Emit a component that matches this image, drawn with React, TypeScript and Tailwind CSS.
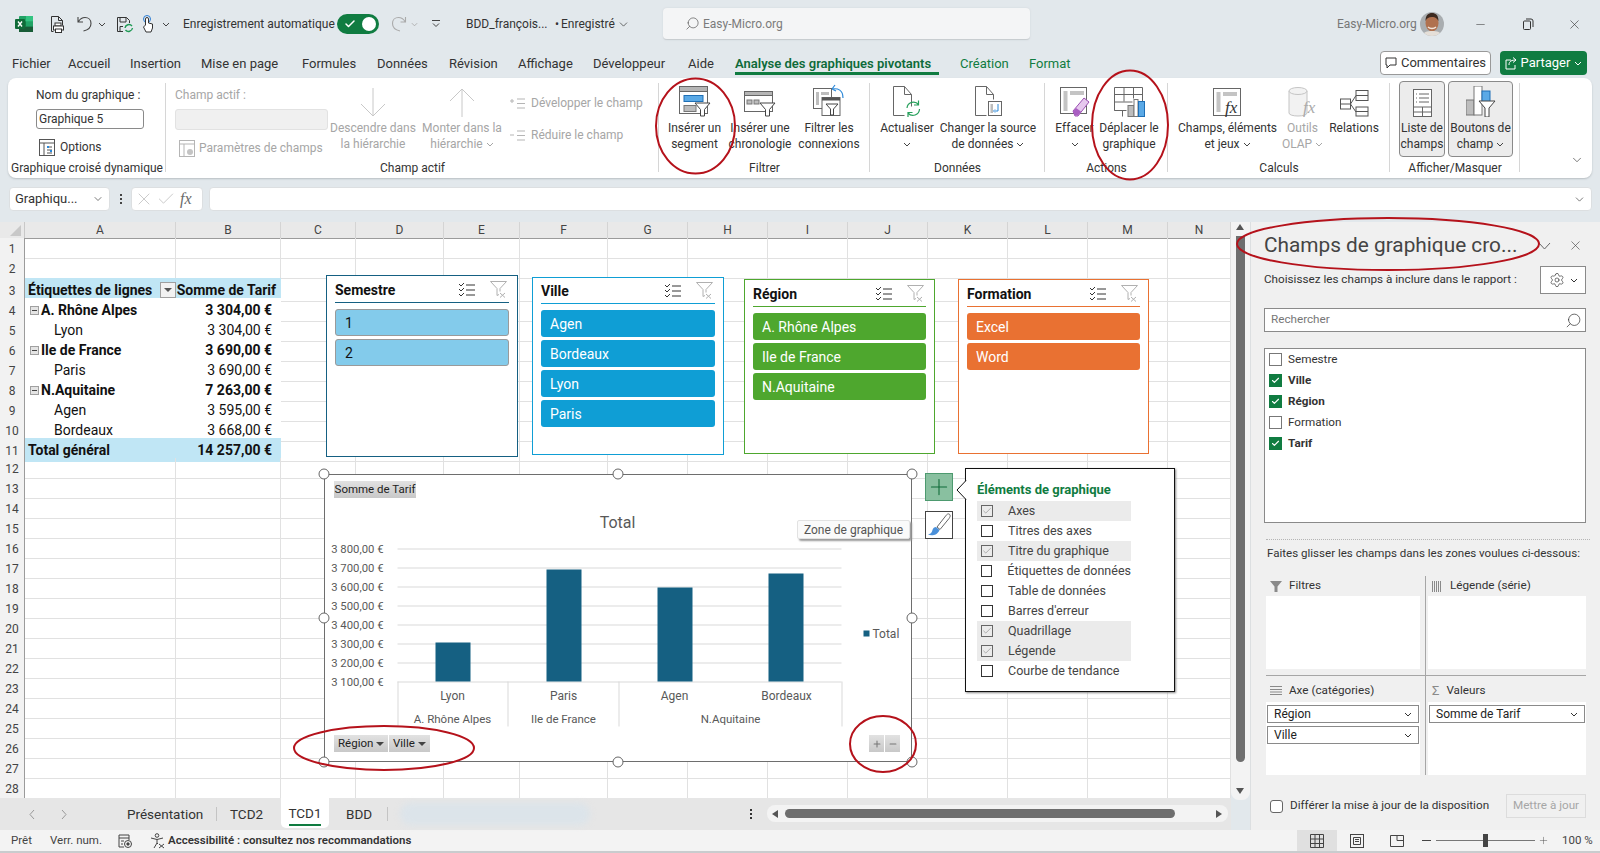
import type { ReactNode } from 'react';
import { ChevronDown, X, Check, Search, Settings, Minus, Plus } from 'lucide-react';

// small chevron used all over the ribbon
function Chev({ className = 'text-[#444]' }: { className?: string }) {
  return (
    <svg width="8" height="5" viewBox="0 0 8 5" className={`inline-block ${className}`}>
      <path d="M1 1l3 3 3-3" fill="none" stroke="currentColor" strokeWidth="1" />
    </svg>
  );
}

function ExcelLogo() {
  return (
    <svg width="18" height="16" viewBox="0 0 18 16">
      <rect x="4" y="0" width="14" height="16" rx="1" fill="#21a366" />
      <rect x="11" y="0" width="7" height="5.3" fill="#33c481" />
      <rect x="4" y="5.3" width="7" height="5.3" fill="#107c41" />
      <rect x="11" y="10.6" width="7" height="5.4" fill="#185c37" />
      <rect x="4" y="10.6" width="7" height="5.4" fill="#185c37" />
      <rect x="0" y="3" width="10" height="10" rx="1" fill="#0f6b38" />
      <path d="M3 5.5l4 5M7 5.5l-4 5" stroke="#fff" strokeWidth="1.4" />
    </svg>
  );
}

function Avatar() {
  return (
    <svg width="24" height="24" viewBox="0 0 24 24">
      <clipPath id="av"><circle cx="12" cy="12" r="12" /></clipPath>
      <g clipPath="url(#av)">
        <rect width="24" height="24" fill="#a9adb0" />
        <ellipse cx="12" cy="11" rx="6.5" ry="8.5" fill="#b0714f" />
        <path d="M5.5 9c0-6 3-8 6.5-8s6.5 2 6.5 8c-2-3-3-4-6.5-4s-5 1-6.5 4z" fill="#3d2a20" />
        <path d="M8 15c2 2 6 2 8 0" stroke="#f2e4da" strokeWidth="1.4" fill="none" />
        <path d="M2 24c1-4 5-5 10-5s9 1 10 5z" fill="#e5dfd8" />
      </g>
    </svg>
  );
}

function TitleBar() {
  return (
    <div className="h-[48px] flex items-center pl-[15px] text-[#333] text-[12px]">
      <ExcelLogo />
      <svg width="15" height="17" viewBox="0 0 15 17" className="ml-[17px]" fill="none" stroke="#333">
        <path d="M1.5.5h7l4 4v5M8.5.5v4h4M1.5.5v15h2" />
        <rect x="5" y="7" width="6" height="3" fill="#fff" />
        <rect x="3.5" y="10" width="10" height="4" fill="#fff" />
        <rect x="5.5" y="13" width="6" height="3.5" fill="#fff" />
      </svg>
      <svg width="16" height="16" viewBox="0 0 16 16" className="ml-[12px]" fill="none" stroke="#444" strokeWidth="1.1">
        <path d="M1 1v5h5M1.5 5.5C3 3 5 1.5 8 1.5c3.500 0 6 2.500 6 6 0 3.500-3 6.500-7.500 7.500" />
      </svg>
      <span className="ml-[5px] w-[8px] flex"><Chev /></span>
      <svg width="18" height="17" viewBox="0 0 18 17" className="ml-[10px]" fill="none" stroke="#333">
        <path d="M7 15.500H1.500v-14h9l3 3V7" />
        <path d="M4 1.500V6h6V1.500M4 15v-4.500h3" />
        <path d="M9 12a4 4 0 0 1 7-2M16.500 12a4 4 0 0 1-7 2" stroke="#1f9a55" strokeWidth="1.400" />
      </svg>
      <svg width="12" height="18" viewBox="0 0 12 18" className="ml-[8px]" fill="none" stroke="#333">
        <circle cx="5" cy="4" r="3.500" stroke="#2b7cd3" />
        <path d="M3.500 10V4a1.500 1.500 0 0 1 3 0v4l4 1v4l-1.500 4H4l-2.500-5z" fill="#fff" />
      </svg>
      <span className="ml-[8px] w-[8px] flex"><Chev /></span>
      <span className="ml-[13px] w-[146px] whitespace-nowrap">Enregistrement automatique</span>
      <div className="ml-[8px] w-[42px] h-[20px] rounded-full bg-[#107c41] flex items-center justify-between pl-[7px] pr-[3px]">
        <Check size={12} strokeWidth={3} className="text-white" />
        <span className="w-[14px] h-[14px] rounded-full bg-white" />
      </div>
      <svg width="17" height="16" viewBox="0 0 16 16" className="ml-[11px] -scale-x-100" fill="none" stroke="#aaa" strokeWidth="1.1">
        <path d="M1 1v5h5M1.500 5.500C3 3 5 1.500 8 1.500c3.500 0 6 2.500 6 6 0 3.500-3 6.500-7.500 7.500" />
      </svg>
      <span className="ml-[4px] w-[7px] flex"><Chev className="text-[#aaa]" /></span>
      <svg width="8" height="8" viewBox="0 0 8 8" className="ml-[14px]" fill="none" stroke="#444">
        <path d="M0 .5h8M1 3.500l3 3 3-3" />
      </svg>
      <span className="ml-[26px] w-[78px] whitespace-nowrap">BDD_françois...</span>
      <span className="ml-[9px] w-[8px] text-center">•</span>
      <span className="w-[56px] whitespace-nowrap">Enregistré</span>
      <ChevronDown size={13} strokeWidth={1.300} />
      <div className="ml-[33px] w-[367px] h-[32px] rounded-[4px] bg-[#f4f5f6] border-b border-[#c8cdd0] shadow-[0_0_2px_#cfd4d8] flex items-center pl-[22px] text-[#7b7b7b]">
        <Search size={15} strokeWidth={1.100} className="-scale-x-100 text-[#555]" />
        <span className="ml-[3px]">Easy-Micro.org</span>
      </div>
      <span className="ml-[307px] w-[76px] whitespace-nowrap text-[#777]">Easy-Micro.org</span>
      <span className="ml-[7px] flex"><Avatar /></span>
      <Minus size={13} strokeWidth={1} className="ml-[30px]" />
      <svg width="12" height="12" viewBox="0 0 12 12" className="ml-[35px]" fill="none" stroke="#333">
        <rect x="1.500" y="3" width="7" height="8.500" rx="1" />
        <path d="M4 1h5a2 2 0 0 1 2 2v6" />
      </svg>
      <X size={15} strokeWidth={1} className="ml-[33px]" />
    </div>
  );
}

const tabs: [string, string][] = [
  ['Fichier', 'w-[56px]'],
  ['Accueil', 'w-[62px]'],
  ['Insertion', 'w-[71px]'],
  ['Mise en page', 'w-[101px]'],
  ['Formules', 'w-[75px]'],
  ['Données', 'w-[72px]'],
  ['Révision', 'w-[69px]'],
  ['Affichage', 'w-[75px]'],
  ['Développeur', 'w-[95px]'],
  ['Aide', 'w-[47px]'],
];

function TabRow() {
  return (
    <div className="h-[30px] flex pl-[12px] text-[13px] text-[#333] relative">
      {tabs.map(([t, w]) => (
        <span key={t} className={`${w} pt-[6px] whitespace-nowrap`}>{t}</span>
      ))}
      <span className="w-[204px] mr-[21px] pt-[6px] whitespace-nowrap font-semibold text-[#0e6b3a] border-b-[3px] border-[#107c41] h-[27px]">
        Analyse des graphiques pivotants
      </span>
      <span className="w-[69px] pt-[6px] text-[#107c41]">Création</span>
      <span className="pt-[6px] text-[#107c41]">Format</span>
      <div className="ml-auto flex mr-[13px] mt-[3px] h-[24px]">
        <div className="w-[111px] rounded-[4px] bg-white border border-[#999] flex items-center justify-center gap-[4px]">
          <svg width="12" height="12" viewBox="0 0 12 12" fill="none" stroke="#333"><path d="M1 1h10v7H5l-3 3V8H1z" /></svg>
          Commentaires
        </div>
        <div className="ml-[9px] w-[87px] rounded-[4px] bg-[#107c41] text-white flex items-center justify-center gap-[4px]">
          <svg width="12" height="13" viewBox="0 0 12 13" fill="none" stroke="#fff"><path d="M6 3H1v9h9V8M4 8c0-4 3-5 7-5M8 .5L11 3 8 5.500" /></svg>
          Partager
          <Chev className="text-white" />
        </div>
      </div>
    </div>
  );
}

function Group({ w, label, children }: { w: string; label: string; children: ReactNode }) {
  return (
    <div className={`${w} relative flex flex-col`}>
      <div className="h-[82px] flex pt-[5px]">{children}</div>
      <div className="h-[16px] leading-[16px] text-center text-[12px] text-[#333] whitespace-nowrap">{label}</div>
      <span className="absolute right-0 top-[5px] h-[89px] border-r border-[#d6d6d6]" />
    </div>
  );
}

type BigProps = {
  w: string;
  icon: ReactNode;
  lines: string[];
  chev?: boolean;
  off?: boolean;
  on?: boolean;
};

function Big({ w, icon, lines, chev, off, on }: BigProps) {
  const tone = off ? 'text-[#a6a6a6]' : 'text-[#333]';
  return (
    <div className={`${w} h-[76px] -mt-[1px] flex flex-col items-center text-[12px] leading-[16px] whitespace-nowrap ${tone} ${on ? 'bg-[#ececec] border border-[#8a8a8a] rounded-[4px]' : ''}`}>
      <div className="h-[35px] flex items-end justify-center shrink-0">{icon}</div>
      <span className="mt-[3px]">{lines[0]}</span>
      <span className="flex items-center gap-[3px] h-[16px]">
        {lines[1]}
        {chev && <Chev className={off ? 'text-[#a6a6a6]' : 'text-[#444]'} />}
      </span>
    </div>
  );
}

const st = { fill: '#fff', stroke: '#666' };

const IcSlicer = (
  <svg width="32" height="31" viewBox="0 0 32 31">
    <rect x=".5" y=".5" width="28" height="27" {...st} />
    <rect x=".5" y=".5" width="28" height="5" fill="#b5b5b5" stroke="#666" />
    <rect x="5" y="9.500" width="19" height="6" fill="#5aa9e6" stroke="#1f6fb5" />
    <rect x="5" y="19.500" width="12" height="6" fill="#bdbdbd" stroke="#777" />
    <path d="M16 17h15l-5.500 6.500V30h-4v-6.500z" fill="#fff" stroke="#444" />
  </svg>
);
const IcTimeline = (
  <svg width="32" height="26" viewBox="0 0 32 26">
    <rect x=".5" y=".5" width="28" height="20" {...st} />
    <rect x=".5" y=".5" width="28" height="4" fill="#b5b5b5" stroke="#666" />
    <rect x="3" y="9" width="5" height="4" fill="#bdbdbd" stroke="#777" />
    <rect x="10" y="9" width="5" height="4" fill="#bdbdbd" stroke="#777" />
    <path d="M16 12h15l-5.500 6.500V25h-4v-6.500z" fill="#fff" stroke="#444" />
  </svg>
);
const IcConnect = (
  <svg width="32" height="33" viewBox="0 0 32 33">
    <rect x=".5" y="4.500" width="18" height="20" {...st} />
    <rect x="3" y="8" width="3" height="13" fill="#bdbdbd" />
    <rect x="8" y="8" width="8" height="3" fill="#bdbdbd" />
    <rect x="9" y="13.500" width="18" height="18" {...st} />
    <rect x="9" y="13.500" width="18" height="3" fill="#555" />
    <path d="M13 20h12l-4.500 5v6h-3v-6z" fill="#fff" stroke="#444" />
    <path d="M19 5l3-4M19 5l4 2M19 5c6-1 11 1 11 9" fill="none" stroke="#2b88d8" strokeWidth="1.200" />
  </svg>
);
const IcRefresh = (
  <svg width="28" height="31" viewBox="0 0 28 31" fill="none">
    <path d="M.5.5h11l7 8v12M11.500.5v8h7M.5.5v29h11" stroke="#666" />
    <path d="M14 22a6.500 6.500 0 0 1 11.500-3.500M26.500 23a6.500 6.500 0 0 1-11.500 4M25.500 14.500v4.500h-4.500M15 31v-4.500h4.500" stroke="#27a05c" strokeWidth="1.200" />
  </svg>
);
const IcSource = (
  <svg width="27" height="31" viewBox="0 0 27 31" fill="none">
    <path d="M.5.5h11l7 8v5M11.500.5v8h7M.5.5v29h11" stroke="#666" />
    <rect x="13.500" y="15.500" width="13" height="14" fill="#fff" stroke="#666" />
    <rect x="15.500" y="18" width="2.500" height="9" fill="#bdbdbd" />
    <path d="M23 18v7h-3M20 23.500L18.500 25 20 26.500" stroke="#2b88d8" />
  </svg>
);
const IcErase = (
  <svg width="30" height="30" viewBox="0 0 30 30">
    <rect x=".5" y=".5" width="26" height="26" {...st} />
    <rect x="3.500" y="4" width="4" height="20" fill="#c4c4c4" />
    <rect x="10" y="4" width="14" height="4" fill="#c4c4c4" />
    <path d="M13 24l11-13 5 4-11 14h-3z" fill="#e6c8ee" stroke="#9a4fb2" />
    <path d="M15 28.500l-2-4 3-3.500 5 3.500-3 4z" fill="#a95ec2" />
  </svg>
);
const IcMove = (
  <svg width="31" height="30" viewBox="0 0 31 30">
    <path d="M.5.5h28v16M.5.5v23h8v6" fill="#fff" stroke="#666" />
    <path d="M.5 7.500h28M.5 15h18M.5 23.500h12M10 .5v14M19.500.5v11" fill="none" stroke="#666" />
    <rect x="14" y="18.500" width="6" height="11" fill="#bdbdbd" stroke="#777" />
    <rect x="20" y="12.500" width="4" height="17" fill="#fff" stroke="#777" />
    <rect x="24.500" y="14.500" width="6" height="15" fill="#5aa9e6" stroke="#1f6fb5" />
  </svg>
);
const IcFx = (
  <svg width="29" height="29" viewBox="0 0 29 29">
    <rect x=".5" y=".5" width="27" height="27" {...st} />
    <rect x="3.500" y="4" width="4" height="20" fill="#c4c4c4" />
    <rect x="10" y="4" width="14" height="4" fill="#c4c4c4" />
    <text x="12" y="25" fontFamily="'Liberation Serif',serif" fontStyle="italic" fontSize="17" fill="#333">fx</text>
  </svg>
);
const IcOlap = (
  <svg width="29" height="30" viewBox="0 0 29 30">
    <path d="M1 4v22c0 4 18 4 18 0V4" fill="#f2f2f2" stroke="#c4c4c4" />
    <ellipse cx="10" cy="4" rx="9" ry="3.500" fill="#f2f2f2" stroke="#c4c4c4" />
    <text x="15" y="26" fontFamily="'Liberation Serif',serif" fontStyle="italic" fontSize="17" fill="#aaa">fx</text>
  </svg>
);
const IcRel = (
  <svg width="29" height="27" viewBox="0 0 29 27" fill="#fff" stroke="#555">
    <rect x="16" y=".5" width="12" height="10" />
    <path d="M16 5.500h12" />
    <rect x="16" y="17" width="12" height="9" />
    <path d="M16 21.500h12" />
    <rect x=".5" y="9" width="10" height="10" />
    <path d="M.5 14h10M10.500 14l5.500-8.500M10.500 14l5.500 8" fill="none" />
  </svg>
);
const IcList = (
  <svg width="19" height="28" viewBox="0 0 19 28" fill="#fff" stroke="#666">
    <rect x=".5" y=".5" width="18" height="27" />
    <path d="M.5 18h18M.5 23h18M9.500 18v9" fill="none" />
    <path d="M6 5h10M6 9h10M6 13h10M3 5h1M3 9h1M3 13h1" fill="none" />
  </svg>
);
const IcBtn = (
  <svg width="30" height="31" viewBox="0 0 30 31">
    <rect x="0" y="14" width="8" height="15" fill="#bdbdbd" stroke="#777" />
    <rect x="8" y="0" width="8" height="29" fill="#fff" stroke="#777" />
    <rect x="16" y="5" width="8" height="12" fill="#5aa9e6" stroke="#1f6fb5" />
    <path d="M13 15h16l-6 7v9h-4v-9z" fill="#fff" stroke="#444" />
  </svg>
);

function ArrowDown({ up }: { up?: boolean }) {
  return (
    <svg width="26" height="29" viewBox="0 0 26 29" fill="none" stroke="#c8c8c8" className={up ? '-scale-y-100' : ''}>
      <path d="M13 0v28M1 16l12 12 12-12" />
    </svg>
  );
}

function Ribbon() {
  return (
    <div className="mx-[8px] h-[100px] flex rounded-[8px] bg-white shadow-[0_1px_2px_#b8bec2]">
      <Group w="w-[158px]" label="Graphique croisé dynamique">
        <div className="pl-[28px] text-[12px] text-[#333]">
          <div className="mt-[4px] leading-[16px]">Nom du graphique :</div>
          <div className="mt-[6px] w-[108px] h-[20px] rounded-[3px] border border-[#8a8a8a] pl-[2px] leading-[18px] whitespace-nowrap">Graphique 5</div>
          <div className="mt-[9px] flex items-center gap-[5px]">
            <svg width="16" height="17" viewBox="0 0 16 17" fill="#fff" stroke="#555" className="ml-[3px]">
              <rect x=".5" y=".5" width="15" height="16" />
              <path d="M.5 4h15M5 4v13M8 8h5M8 11h5M8 14h5" fill="none" />
              <rect x="8" y="7" width="2" height="2" fill="#2b88d8" stroke="none" />
              <rect x="11" y="11" width="2" height="2" fill="#2b88d8" stroke="none" />
            </svg>
            Options
          </div>
        </div>
      </Group>
      <Group w="w-[493px]" label="Champ actif">
        <div className="pl-[9px] w-[162px] text-[12px] text-[#a6a6a6]">
          <div className="mt-[4px] leading-[16px]">Champ actif :</div>
          <div className="mt-[6px] w-[153px] h-[21px] rounded-[3px] bg-[#f0f0f0] border border-[#e2e2e2]" />
          <div className="mt-[9px] flex items-center gap-[4px] whitespace-nowrap">
            <svg width="16" height="17" viewBox="0 0 16 17" fill="#fff" stroke="#b5b5b5" className="ml-[4px]">
              <rect x=".5" y=".5" width="15" height="16" />
              <path d="M.5 4h15M5 4v13" fill="none" />
              <circle cx="11" cy="12" r="3" fill="#c4c4c4" stroke="none" />
            </svg>
            Paramètres de champs
          </div>
        </div>
        <Big w="w-[90px]" off icon={<ArrowDown />} lines={['Descendre dans', 'la hiérarchie']} />
        <Big w="w-[88px]" off chev icon={<ArrowDown up />} lines={['Monter dans la', 'hiérarchie']} />
        <div className="pl-[4px] text-[12px] text-[#a6a6a6] whitespace-nowrap">
          <div className="mt-[12px] flex items-center gap-[6px] h-[16px]">
            <svg width="15" height="11" viewBox="0 0 15 11" stroke="#b5b5b5" fill="none"><path d="M0 3h4M2 1v4M7 1h8M7 5.500h8M7 10h8" /></svg>
            Développer le champ
          </div>
          <div className="mt-[16px] flex items-center gap-[6px] h-[16px]">
            <svg width="15" height="11" viewBox="0 0 15 11" stroke="#b5b5b5" fill="none"><path d="M0 5h4M7 1h8M7 5.500h8M7 10h8" /></svg>
            Réduire le champ
          </div>
        </div>
      </Group>
      <Group w="w-[211px]" label="Filtrer">
        <Big w="w-[71px]" icon={IcSlicer} lines={['Insérer un', 'segment']} />
        <Big w="w-[60px]" icon={IcTimeline} lines={['Insérer une', 'chronologie']} />
        <Big w="w-[70px] ml-[4px]" icon={IcConnect} lines={['Filtrer les', 'connexions']} />
      </Group>
      <Group w="w-[175px]" label="Données">
        <Big w="w-[74px]" chev icon={IcRefresh} lines={['Actualiser', '']} />
        <Big w="w-[88px]" chev icon={IcSource} lines={['Changer la source', 'de données']} />
      </Group>
      <Group w="w-[123px]" label="Actions">
        <Big w="w-[59px]" chev icon={IcErase} lines={['Effacer', '']} />
        <Big w="w-[50px]" icon={IcMove} lines={['Déplacer le', 'graphique']} />
      </Group>
      <Group w="w-[222px]" label="Calculs">
        <Big w="w-[119px]" chev icon={IcFx} lines={['Champs, éléments', 'et jeux']} />
        <Big w="w-[31px]" off chev icon={IcOlap} lines={['Outils', 'OLAP']} />
        <Big w="w-[72px]" icon={IcRel} lines={['Relations', '']} />
      </Group>
      <Group w="w-[130px]" label="Afficher/Masquer">
        <div className="flex gap-[3px] pl-[9px] -mt-[1px]">
          <Big w="w-[46px]" on icon={IcList} lines={['Liste de', 'champs']} />
          <Big w="w-[65px]" on chev icon={IcBtn} lines={['Boutons de', 'champ']} />
        </div>
      </Group>
      <div className="flex-1 flex items-end justify-center pb-[11px]">
        <ChevronDown size={14} strokeWidth={1.200} className="text-[#444] ml-[41px]" />
      </div>
    </div>
  );
}

function FormulaBar() {
  return (
    <div className="h-[44px] pt-[9px] flex items-start pl-[9px] pr-[8px] text-[#333] text-[13px]">
      <div className="w-[101px] h-[24px] bg-white rounded-[4px] border border-[#dcdfe1] flex items-center justify-between pl-[5px] pr-[5px] whitespace-nowrap">
        Graphiqu...
        <ChevronDown size={12} strokeWidth={1.300} />
      </div>
      <div className="w-[21px] h-[24px] flex flex-col items-center justify-center gap-[2px]">
        <span className="w-[2px] h-[2px] bg-[#444]" />
        <span className="w-[2px] h-[2px] bg-[#444]" />
        <span className="w-[2px] h-[2px] bg-[#444]" />
      </div>
      <div className="w-[72px] h-[24px] bg-white rounded-[4px] border border-[#dcdfe1] flex items-center gap-[2px] pl-[2px] text-[#b0b0b0]">
        <X size={20} strokeWidth={0.800} />
        <Check size={20} strokeWidth={0.800} />
        <span className="ml-[2px] italic text-[#6a6a6a] [font-family:'Liberation_Serif',serif] text-[16px]">fx</span>
      </div>
      <div className="ml-[6px] flex-1 h-[24px] bg-white rounded-[4px] border border-[#dcdfe1] flex items-center justify-end pr-[5px]">
        <ChevronDown size={13} strokeWidth={1.200} />
      </div>
    </div>
  );
}

const cols = ['A', 'B', 'C', 'D', 'E', 'F', 'G', 'H', 'I', 'J', 'K', 'L', 'M', 'N'];
const gridCols = 'grid-cols-[25px_151px_105px_75px_88px_76px_88px_80px_80px_80px_80px_80px_80px_80px_63px]';

type PivotRow = { a: string; b: string; bold?: boolean; kind: 'head' | 'group' | 'item' | 'total'; last?: boolean };

const pivot: Record<number, PivotRow> = {
  3: { a: 'Étiquettes de lignes', b: 'Somme de Tarif', bold: true, kind: 'head' },
  4: { a: 'A. Rhône Alpes', b: '3 304,00 €', bold: true, kind: 'group' },
  5: { a: 'Lyon', b: '3 304,00 €', kind: 'item' },
  6: { a: 'Ile de France', b: '3 690,00 €', bold: true, kind: 'group' },
  7: { a: 'Paris', b: '3 690,00 €', kind: 'item' },
  8: { a: 'N.Aquitaine', b: '7 263,00 €', bold: true, kind: 'group' },
  9: { a: 'Agen', b: '3 595,00 €', kind: 'item' },
  10: { a: 'Bordeaux', b: '3 668,00 €', kind: 'item', last: true },
  11: { a: 'Total général', b: '14 257,00 €', bold: true, kind: 'total' },
};

function PivotCells({ row }: { row: PivotRow }) {
  const band = row.kind === 'head' || row.kind === 'total' ? 'bg-[#c0e6f5]' : 'bg-white';
  const line = row.kind === 'head' || row.kind === 'group' || row.last ? 'border-[#45b0e1]' : row.kind === 'total' ? 'border-[#c0e6f5]' : 'border-[#e1e1e1]';
  const weight = row.bold ? 'font-bold' : '';
  return (
    <>
      <div className={`${band} ${line} ${weight} border-b flex items-center pt-[2px] text-[14px] text-[#111] whitespace-nowrap`}>
        {row.kind === 'group' && (
          <span className="ml-[5px] mr-[2px] w-[9px] h-[9px] bg-[#e4e4e4] border border-[#a0a0a0] flex items-center justify-center">
            <span className="w-[5px] h-[1px] bg-[#444]" />
          </span>
        )}
        <span className={row.kind === 'item' ? 'pl-[29px]' : row.kind === 'group' ? '' : 'pl-[3px]'}>{row.a}</span>
        {row.kind === 'head' && (
          <span className="ml-auto -mt-[2px] w-[16px] h-[16px] bg-[#f2f2f2] border border-[#a0a0a0] flex items-center justify-center">
            <span className="border-x-[4px] border-x-transparent border-t-[4px] border-t-[#555]" />
          </span>
        )}
      </div>
      <div className={`${band} ${line} ${weight} border-b flex items-center justify-end pt-[2px] text-[14px] text-[#111] whitespace-nowrap ${row.kind === 'head' ? 'pr-[5px]' : 'pr-[9px]'}`}>
        {row.b}
      </div>
    </>
  );
}

function SheetGrid() {
  const rows = Array.from({ length: 28 }, (_, i) => i + 1);
  return (
    <div className="h-[576px] bg-white overflow-hidden">
      <div className={`grid ${gridCols} h-[16px] bg-[#e9e9e9] text-[12px] text-[#444]`}>
        <div className="relative border-r border-[#c8c8c8]">
          <span className="absolute right-[3px] bottom-[2px] border-l-[11px] border-l-transparent border-b-[11px] border-b-[#c8c8c8]" />
        </div>
        {cols.map((c) => (
          <div key={c} className="border-r border-[#d4d4d4] flex items-center justify-center leading-none">{c}</div>
        ))}
      </div>
      <div className="border-t border-[#9b9b9b] -mb-px" />
      {rows.map((r) => (
        <div key={r} className={`grid ${gridCols} h-[20px]`}>
          <div className="bg-[#f2f2f2] border-r border-b border-r-[#9b9b9b] border-b-[#d9d9d9] flex items-center justify-center pt-[2px] text-[12px] text-[#444]">{r}</div>
          {pivot[r] ? (
            <PivotCells row={pivot[r]} />
          ) : (
            <>
              <div className="border-r border-b border-[#e1e1e1]" />
              <div className="border-r border-b border-[#e1e1e1]" />
            </>
          )}
          {cols.slice(2).map((c) => (
            <div key={c} className="border-r border-b border-[#e1e1e1]" />
          ))}
        </div>
      ))}
    </div>
  );
}

function SheetTabs() {
  const sep = <span className="block w-px h-[14px] bg-[#c4c4c4]" />;
  return (
    <div className="h-[32px] bg-[#e6e6e6] flex items-center text-[13.500px] text-[#333]">
      <svg width="8" height="11" viewBox="0 0 8 11" fill="none" stroke="#999" className="ml-[28px]"><path d="M6 1L2 5.500 6 10" /></svg>
      <svg width="8" height="11" viewBox="0 0 8 11" fill="none" stroke="#999" className="ml-[24px]"><path d="M2 1l4 4.500L2 10" /></svg>
      <span className="ml-[59px] w-[77px] whitespace-nowrap">Présentation</span>
      <span className="ml-[12px]">{sep}</span>
      <span className="ml-[13px] w-[34px]">TCD2</span>
      <div className="ml-[17px] w-[48px] h-[30px] self-start bg-white rounded-b-[5px] flex flex-col items-center pt-[6px] leading-[18px]">
        TCD1
        <span className="w-[32px] h-[2px] bg-[#107c41] mt-[2px]" />
      </div>
      <span className="ml-[17px] w-[28px]">BDD</span>
      <span className="ml-[13px]">{sep}</span>
      <div className="ml-[12px] w-[190px] h-[22px] rounded-full bg-[#dce4ea] blur-[3px]" />
      <span className="ml-[160px] flex flex-col gap-[2px]">
        <span className="w-[2px] h-[2px] bg-[#333]" />
        <span className="w-[2px] h-[2px] bg-[#333]" />
        <span className="w-[2px] h-[2px] bg-[#333]" />
      </span>
      <div className="ml-[15px] w-[461px] h-[17px] -mt-[1px] rounded-[8px] bg-[#f3f3f3] flex items-center">
        <span className="ml-[5px] border-y-[4px] border-y-transparent border-r-[6px] border-r-[#555]" />
        <span className="ml-[7px] w-[390px] h-[9px] rounded-full bg-[#6e6e6e]" />
        <span className="ml-auto mr-[6px] border-y-[4px] border-y-transparent border-l-[6px] border-l-[#555]" />
      </div>
    </div>
  );
}

function VScroll() {
  return (
    <div className="w-[19px] flex flex-col items-center">
      <div className="w-[19px] h-[578px] bg-[#f3f3f3] rounded-b-[8px] flex flex-col items-center pr-[1px]">
        <span className="mt-[2px] border-x-[4px] border-x-transparent border-b-[6px] border-b-[#555]" />
        <span className="mt-[6px] w-[9px] h-[526px] rounded-b-full bg-[#6e6e6e]" />
        <span className="mt-[26px] border-x-[4px] border-x-transparent border-t-[6px] border-t-[#555]" />
      </div>
    </div>
  );
}

function FieldCheck({ on }: { on?: boolean }) {
  return on ? (
    <span className="w-[13px] h-[13px] bg-[#107c41] flex items-center justify-center">
      <Check size={9} strokeWidth={3} className="text-white" />
    </span>
  ) : (
    <span className="w-[13px] h-[13px] bg-white border border-[#777]" />
  );
}

const fields: [string, boolean][] = [
  ['Semestre', false],
  ['Ville', true],
  ['Région', true],
  ['Formation', false],
  ['Tarif', true],
];

function Pill({ children }: { children: ReactNode }) {
  return (
    <div className="mx-[1px] h-[18px] bg-white border border-[#8a8a8a] flex items-center justify-between pl-[6px] pr-[6px] text-[12px] text-[#222]">
      {children}
      <Chev className="text-[#333]" />
    </div>
  );
}

function FieldPanel() {
  return (
    <div className="w-[350px] h-[608px] bg-[#f0f0f0] border-l border-[#dcdfe1] pl-[13px] pr-[14px] text-[11.700px] text-[#333] flex flex-col">
      <div className="h-[44px] flex items-center pt-[3px]">
        <span className="text-[20.800px] text-[#444] whitespace-nowrap w-[272px]">Champs de graphique cro...</span>
        <svg width="13" height="8" viewBox="0 0 13 8" fill="none" stroke="#666" className="ml-[2px]"><path d="M1 1l5.500 6L12 1" /></svg>
        <X size={15} strokeWidth={1} className="ml-[17px] text-[#444]" />
      </div>
      <div className="h-[28px] flex items-center justify-between">
        <span className="whitespace-nowrap">Choisissez les champs à inclure dans le rapport :</span>
        <div className="w-[46px] h-[28px] bg-white border border-[#8a8a8a] flex items-center justify-center gap-[5px]">
          <Settings size={16} strokeWidth={1} />
          <Chev className="text-[#333]" />
        </div>
      </div>
      <div className="mt-[14px] h-[24px] bg-white border border-[#8a8a8a] flex items-center justify-between pl-[6px] pr-[3px] text-[#777]">
        Rechercher
        <Search size={17} strokeWidth={1} className="-scale-x-100 text-[#333]" />
      </div>
      <div className="mt-[16px] h-[175px] bg-white border border-[#8a8a8a] pl-[4px]">
        {fields.map(([f, on]) => (
          <div key={f} className={`h-[21px] flex items-center gap-[6px] ${on ? 'font-bold' : ''}`}>
            <FieldCheck on={on} />
            {f}
          </div>
        ))}
      </div>
      <div className="mt-[16px] border-t border-dotted border-[#b5b5b5] -mr-[4px] ml-[2px]" />
      <div className="mt-[5px] ml-[3px] h-[16px] leading-[16px] whitespace-nowrap text-[11.550px]">Faites glisser les champs dans les zones voulues ci-dessous:</div>
      <div className="mt-[15px] ml-[2px] grid grid-cols-[160px_160px]">
        <div className="h-[100px] border-r border-b border-[#a6a6a6] pr-[5px]">
          <div className="h-[20px] flex items-center gap-[7px] pl-[4px]">
            <svg width="12" height="11" viewBox="0 0 12 11" fill="#8a8a8a"><path d="M0 0h12L7.500 5.500V11h-3V5.500z" /></svg>
            Filtres
          </div>
          <div className="h-[73px] bg-white" />
        </div>
        <div className="h-[100px] border-b border-[#a6a6a6] pl-[2px]">
          <div className="h-[20px] flex items-center gap-[9px] pl-[4px]">
            <svg width="9" height="11" viewBox="0 0 9 11" stroke="#8a8a8a" fill="none"><path d="M.5 0v11M2.500 0v11M4.500 0v11M6.500 0v11M8.500 0v11" /></svg>
            Légende (série)
          </div>
          <div className="h-[73px] bg-white" />
        </div>
        <div className="h-[99px] border-r border-[#a6a6a6] pr-[5px]">
          <div className="h-[26px] flex items-center gap-[7px] pl-[4px] pt-[3px]">
            <svg width="12" height="9" viewBox="0 0 12 9" stroke="#8a8a8a" fill="none"><path d="M0 .5h12M0 3.500h12M0 6h12M0 8.500h12" /></svg>
            Axe (catégories)
          </div>
          <div className="h-[73px] bg-white pt-[3px] flex flex-col gap-[3px]">
            <Pill>Région</Pill>
            <Pill>Ville</Pill>
          </div>
        </div>
        <div className="h-[99px] pl-[2px]">
          <div className="h-[26px] flex items-center gap-[7px] pl-[4px] pt-[3px]">
            <span className="text-[#8a8a8a] text-[13px] leading-none">Σ</span>
            Valeurs
          </div>
          <div className="h-[73px] bg-white pt-[3px] flex flex-col">
            <Pill>Somme de Tarif</Pill>
          </div>
        </div>
      </div>
      <div className="mt-[19px] flex items-center h-[24px] ml-[6px]">
        <span className="w-[13px] h-[13px] rounded-[3px] bg-white border border-[#666]" />
        <span className="ml-[7px] whitespace-nowrap">Différer la mise à jour de la disposition</span>
        <div className="ml-auto w-[80px] h-[24px] border border-[#dcdcdc] flex items-center justify-center text-[#a6a6a6]">Mettre à jour</div>
      </div>
    </div>
  );
}

function StatusBar() {
  return (
    <div className="h-[21px] bg-[#f3f3f3] flex items-center text-[11.500px] text-[#444]">
      <span className="ml-[11px] w-[39px]">Prêt</span>
      <span className="w-[68px] whitespace-nowrap">Verr. num.</span>
      <svg width="15" height="16" viewBox="0 0 15 16" fill="none" stroke="#444"><path d="M1 2h10v5M1 2v12h5M1 5h10M3 8h3M3 11h2" /><circle cx="10" cy="11" r="3.500" /><circle cx="10" cy="11" r="1.200" fill="#444" /></svg>
      <svg width="15" height="16" viewBox="0 0 15 16" fill="none" stroke="#444" className="ml-[17px]"><circle cx="7" cy="2.500" r="1.800" /><path d="M1 5l6 1.500L13 5M7 6.500V10l-3 5M7 10l1 1M9 11l5 4M14 11l-5 4" /></svg>
      <span className="ml-[3px] font-semibold whitespace-nowrap text-[#333]">Accessibilité : consultez nos recommandations</span>
      <div className="ml-auto flex items-center">
        <div className="w-[40px] h-[21px] bg-[#e0e0e0] flex items-center justify-center">
          <svg width="14" height="14" viewBox="0 0 14 14" fill="none" stroke="#444"><path d="M.5.500h13v13H.5zM.5 5h13M.5 9.500h13M5 .5v13M9.500.5v13" /></svg>
        </div>
        <div className="w-[40px] flex justify-center">
          <svg width="14" height="14" viewBox="0 0 14 14" fill="none" stroke="#444"><rect x=".5" y=".5" width="13" height="13" /><path d="M3.500 3.500h7v7h-7zM5 5.500h4M5 7.500h4" /></svg>
        </div>
        <div className="w-[40px] flex justify-center">
          <svg width="14" height="12" viewBox="0 0 14 12" fill="none" stroke="#444"><path d="M.5 11.500v-11h13v11zM7 .5v5h6.500" /></svg>
        </div>
        <span className="ml-[5px] w-[9px] h-px bg-[#444]" />
        <div className="ml-[5px] w-[99px] h-px bg-[#777] relative">
          <span className="absolute left-[47px] -top-[6px] w-[5px] h-[13px] bg-[#444]" />
        </div>
        <Plus size={11} strokeWidth={1} className="ml-[3px]" />
        <span className="ml-[13px] w-[38px] whitespace-nowrap">100 %</span>
      </div>
    </div>
  );
}

type SlicerProps = { title: string; items: string[]; box: string; rule: string; item: string; head: string };

function Slicer({ title, items, box, rule, item, head }: SlicerProps) {
  return (
    <div className={`absolute bg-white border ${box} px-[8px] text-[14px]`}>
      <div className={`${head} flex items-center justify-between border-b ${rule}`}>
        <span className="font-bold text-[#111] pt-[2px]">{title}</span>
        <span className="flex items-center gap-[15px] mr-[2px]">
          <svg width="17" height="15" viewBox="0 0 17 15" fill="none" stroke="#333">
            <path d="M1 2l2 2 3-3M1 7l2 2 3-3M1 12l2 2 3-3M8 3h9M8 8h9M8 13h9" />
          </svg>
          <svg width="17" height="17" viewBox="0 0 17 17" fill="none" stroke="#b0b0b0">
            <path d="M.5.5h16l-6.500 7v3M.5.5l6.500 7v7l2-1" />
            <path d="M10 12l5 4.500M15 12l-5 4.500" />
          </svg>
        </span>
      </div>
      <div className="mt-[6px] flex flex-col gap-[3px]">
        {items.map((t) => (
          <div key={t} className={`h-[27px] rounded-[3px] flex items-center pl-[9px] pt-[1px] ${item}`}>{t}</div>
        ))}
      </div>
    </div>
  );
}

const yLabels = ['3 800,00 €', '3 700,00 €', '3 600,00 €', '3 500,00 €', '3 400,00 €', '3 300,00 €', '3 200,00 €', '3 100,00 €'];
const bars = [
  { x: 436, top: 643 },
  { x: 547, top: 570 },
  { x: 658, top: 588 },
  { x: 769, top: 574 },
];

function ChartPlot() {
  return (
    <svg className="absolute left-0 top-0" width="585" height="285" viewBox="325.5 475.5 585 285" fontSize="12" fill="#595959">
      <text x="618" y="528" textAnchor="middle" fontSize="16">Total</text>
      {yLabels.map((l, i) => (
        <g key={l}>
          <line x1="398" x2="842" y1={549.5 + i * 19} y2={549.5 + i * 19} stroke="#d9d9d9" />
          <text x="384" y={553.5 + i * 19} textAnchor="end" fontSize="11.300">{l}</text>
        </g>
      ))}
      {bars.map((b) => (
        <rect key={b.x} x={b.x} y={b.top} width="35" height={682 - b.top} fill="#156082" />
      ))}
      <path d="M398.500 682v45M508.500 682v45M619.500 682v45M842.500 682v45" stroke="#d9d9d9" />
      <text x="453" y="700" textAnchor="middle">Lyon</text>
      <text x="564" y="700" textAnchor="middle">Paris</text>
      <text x="675" y="700" textAnchor="middle">Agen</text>
      <text x="787" y="700" textAnchor="middle">Bordeaux</text>
      <text x="453" y="723" textAnchor="middle" fontSize="11.500">A. Rhône Alpes</text>
      <text x="564" y="723" textAnchor="middle" fontSize="11.500">Ile de France</text>
      <text x="731" y="723" textAnchor="middle" fontSize="11.500">N.Aquitaine</text>
      <rect x="864" y="631" width="6" height="6" fill="#156082" />
      <text x="873" y="638">Total</text>
    </svg>
  );
}

const handles = [
  '-left-[1px] -top-[1px]',
  'left-1/2 -top-[1px]',
  'left-[calc(100%+1px)] -top-[1px]',
  '-left-[1px] top-1/2',
  'left-[calc(100%+1px)] top-1/2',
  '-left-[1px] top-[calc(100%+1px)]',
  'left-1/2 top-[calc(100%+1px)]',
  'left-[calc(100%+1px)] top-[calc(100%+1px)]',
];

function ChartButton({ cls, children }: { cls: string; children: ReactNode }) {
  return (
    <div className={`absolute h-[17px] bg-gradient-to-b from-[#e2e2e2] to-[#c8c8c8] flex items-center text-[11.500px] text-[#222] ${cls}`}>
      {children}
    </div>
  );
}

const caret = <span className="border-x-[4px] border-x-transparent border-t-[4px] border-t-[#444]" />;

function Chart() {
  return (
    <div className="absolute left-[324px] top-[474px] w-[588px] h-[288px] bg-white border-[1.500px] border-[#6e6e6e]">
      <ChartPlot />
      <ChartButton cls="left-[9px] top-[6px] w-[82px] justify-center whitespace-nowrap">Somme de Tarif</ChartButton>
      <ChartButton cls="left-[9px] top-[260px] w-[54px] justify-between px-[4px]">Région {caret}</ChartButton>
      <ChartButton cls="left-[64px] top-[260px] w-[41px] justify-between px-[4px]">Ville {caret}</ChartButton>
      <ChartButton cls="left-[544px] top-[260px] w-[15px] justify-center text-[#777]"><Plus size={10} strokeWidth={2.500} /></ChartButton>
      <ChartButton cls="left-[560px] top-[260px] w-[15px] justify-center text-[#777]"><Minus size={10} strokeWidth={2.500} /></ChartButton>
      {handles.map((h) => (
        <span key={h} className={`absolute ${h} -translate-x-1/2 -translate-y-1/2 w-[11px] h-[11px] rounded-full bg-white border-[1.500px] border-[#666]`} />
      ))}
      <div className="absolute left-[472px] top-[45px] w-[113px] h-[19px] bg-[#fafafa] border border-[#e2e2e2] rounded-[2px] shadow-[2px_2px_2px_#9a9a9a] flex items-center justify-center text-[12px] text-[#555] whitespace-nowrap">
        Zone de graphique
      </div>
    </div>
  );
}

const chartEls: [string, boolean][] = [
  ['Axes', true],
  ['Titres des axes', false],
  ['Titre du graphique', true],
  ['Étiquettes de données', false],
  ['Table de données', false],
  ["Barres d'erreur", false],
  ['Quadrillage', true],
  ['Légende', true],
  ['Courbe de tendance', false],
];

function ChartTools() {
  return (
    <>
      <div className="absolute left-[925px] top-[473px] w-[28px] h-[28px] bg-[#89c0a0] border border-[#4d9a6f] flex items-center justify-center">
        <Plus size={26} strokeWidth={1} className="text-[#0f6b38]" />
      </div>
      <div className="absolute left-[925px] top-[511px] w-[28px] h-[28px] bg-white border border-[#444] flex items-center justify-center">
        <svg width="24" height="24" viewBox="0 0 24 24">
          <path d="M23 2c-1-2-3-1-4 .5L10 14l3 2.500 9-11c1-1.500 1.500-2.500 1-3.500z" fill="#fff" stroke="#666" />
          <path d="M9 14c-3 0-3.500 3-4 4.500S3 21 1 21.500c3 1.500 9 1.500 11.500-4.500z" fill="#4a90d9" />
        </svg>
      </div>
      <div className="absolute left-[965px] top-[468px] w-[210px] h-[224px] bg-white border border-[#111] shadow-[1px_1px_2px_#888] pl-[11px] pt-[13px] text-[12.500px] text-[#444]">
        <svg width="11" height="20" viewBox="0 0 11 20" className="absolute -left-[10px] top-[11px]">
          <path d="M10.500 0L1 10l9.500 10" fill="#fff" stroke="#111" />
          <rect x="10" y="0.500" width="2" height="19" fill="#fff" />
        </svg>
        <div className="h-[19px] leading-[16px] font-bold text-[#107c41] text-[13px] whitespace-nowrap">Éléments de graphique</div>
        {chartEls.map(([t, on]) => (
          <div key={t} className={`w-[154px] h-[20px] flex items-center whitespace-nowrap ${on ? 'bg-[#ebebeb]' : ''}`}>
            <span className={`ml-[4px] w-[12px] h-[12px] border flex items-center justify-center ${on ? 'border-[#666]' : 'border-[#333] bg-white'}`}>
              {on && <Check size={10} strokeWidth={1.500} className="text-[#888]" />}
            </span>
            <span className="ml-[15px]">{t}</span>
          </div>
        ))}
      </div>
    </>
  );
}

// the red circles drawn by hand on top of the screenshot
function Annotations() {
  return (
    <svg className="absolute left-0 top-0 pointer-events-none" width="1600" height="853" fill="none" stroke="#b5121b" strokeWidth="2">
      <ellipse cx="695.500" cy="126" rx="39.500" ry="47.500" />
      <ellipse cx="1130" cy="125" rx="38" ry="54.500" />
      <ellipse cx="1388" cy="244" rx="151" ry="26" />
      <ellipse cx="384" cy="748" rx="90" ry="22" />
      <ellipse cx="883" cy="744" rx="33" ry="28" />
    </svg>
  );
}

export default function App() {
  return (
    <div className="relative w-[1600px] h-[853px] overflow-hidden bg-[#e2e8ec] [font-family:Roboto,sans-serif]">
      <TitleBar />
      <TabRow />
      <Ribbon />
      <FormulaBar />
      <div className="h-[608px] flex">
        <div className="w-[1231px] flex flex-col">
          <SheetGrid />
          <SheetTabs />
        </div>
        <VScroll />
        <FieldPanel />
      </div>
      <StatusBar />
      <div className="h-[2px] bg-[#c9ccce]" />

      <Slicer
        title="Semestre"
        items={['1', '2']}
        box="left-[326px] top-[275px] w-[192px] h-[182px] border-[#156082]"
        head="h-[27px]"
        rule="border-[#156082]"
        item="bg-[#83cbeb] border border-[#9a9a9a] text-[#111]"
      />
      <Slicer
        title="Ville"
        items={['Agen', 'Bordeaux', 'Lyon', 'Paris']}
        box="left-[532px] top-[277px] w-[192px] h-[178px] border-[#0f9ed5]"
        head="h-[26px]"
        rule="border-[#0f9ed5]"
        item="bg-[#0f9ed5] text-white"
      />
      <Slicer
        title="Région"
        items={['A. Rhône Alpes', 'Ile de France', 'N.Aquitaine']}
        box="left-[744px] top-[279px] w-[191px] h-[175px] border-[#4ea72e]"
        head="h-[27px]"
        rule="border-[#4ea72e]"
        item="bg-[#4ea72e] text-white"
      />
      <Slicer
        title="Formation"
        items={['Excel', 'Word']}
        box="left-[958px] top-[279px] w-[191px] h-[175px] border-[#e97132]"
        head="h-[27px]"
        rule="border-[#e97132]"
        item="bg-[#e97132] text-white"
      />
      <Chart />
      <ChartTools />
      <Annotations />
    </div>
  );
}
